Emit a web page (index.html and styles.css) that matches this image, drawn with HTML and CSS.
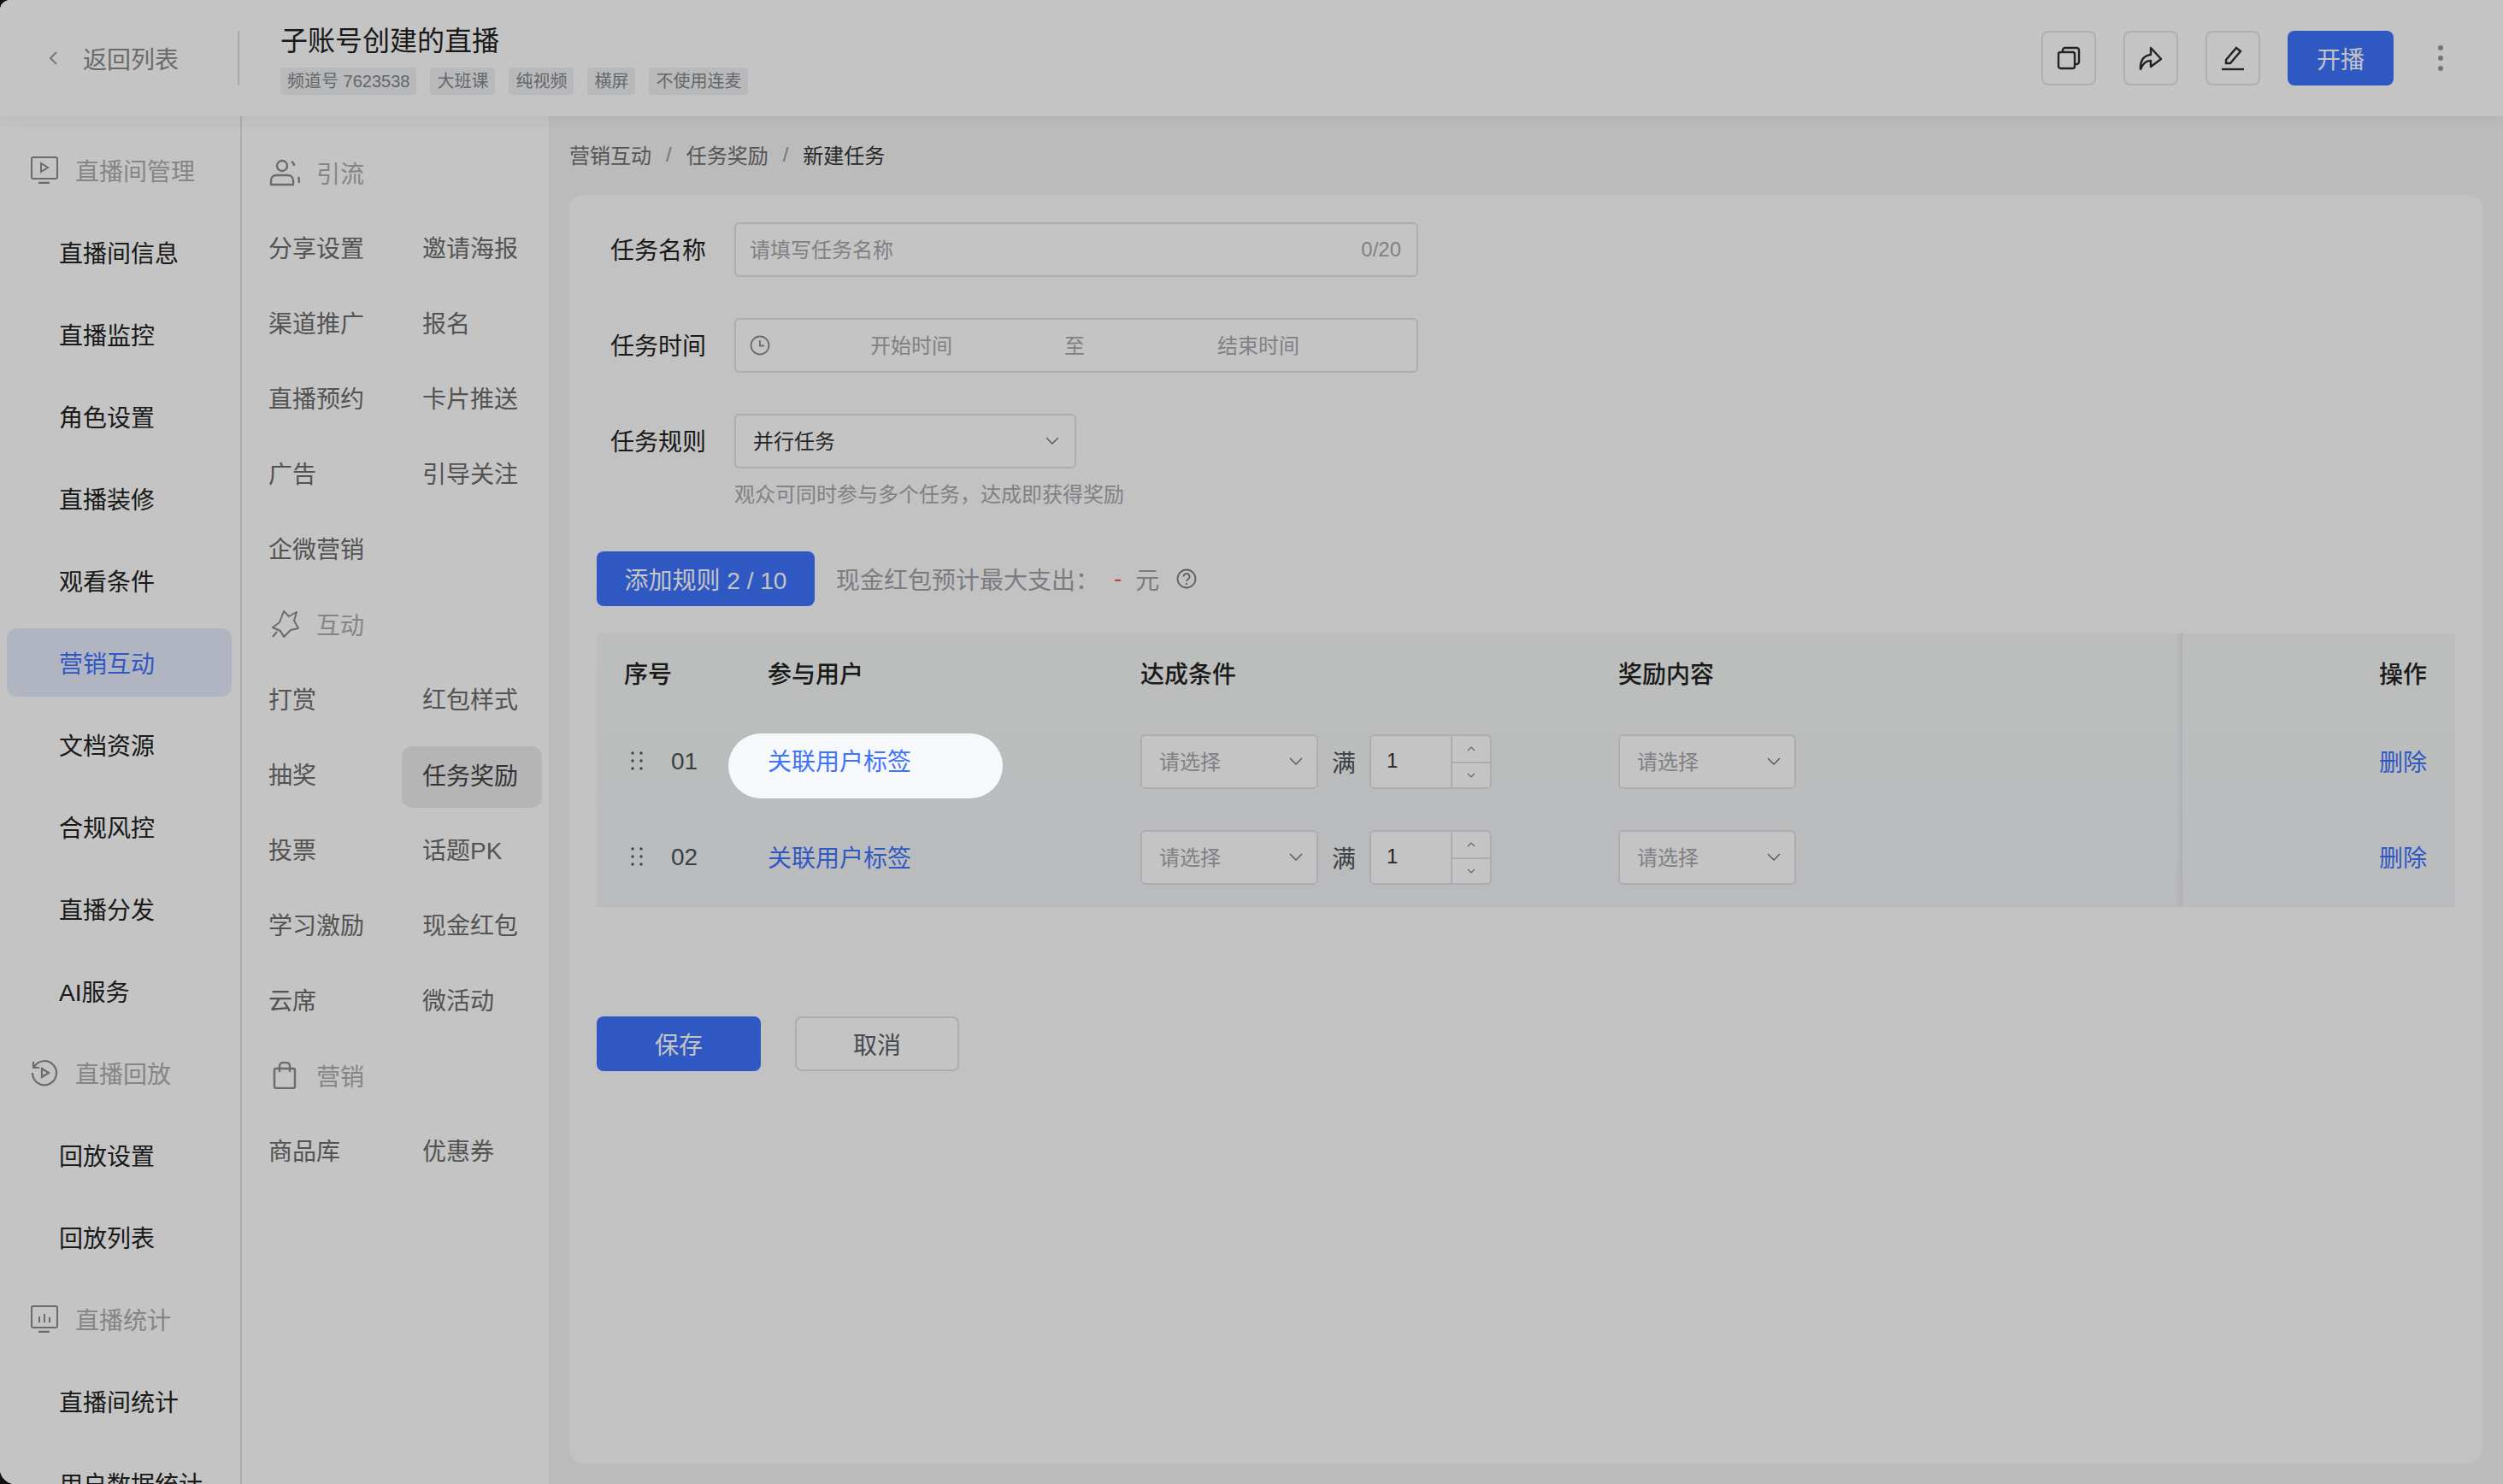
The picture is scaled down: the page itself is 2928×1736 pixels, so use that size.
FILE: index.html
```html
<!DOCTYPE html>
<html lang="zh-CN">
<head>
<meta charset="utf-8">
<title>新建任务</title>
<link rel="stylesheet" href="styles.css">
</head>
<body>
<div class="shell">

  <header class="topbar">
    <div class="back">
      <svg class="back-icon" width="12" height="20" viewBox="0 0 12 20"><path d="M10 3 3 10l7 7" fill="none" stroke="#9a9a9a" stroke-width="2"/></svg>
      <span>返回列表</span>
    </div>
    <div class="live-info">
      <div class="live-title">子账号创建的直播</div>
      <div class="tags">
        <span class="tag">频道号 7623538</span>
        <span class="tag">大班课</span>
        <span class="tag">纯视频</span>
        <span class="tag">横屏</span>
        <span class="tag">不使用连麦</span>
      </div>
    </div>
    <div class="actions">
      <button class="icon-btn">
        <svg width="28" height="28" viewBox="0 0 28 28" fill="none" stroke="#2e2e2e" stroke-width="2.4"><rect x="2" y="7" width="19" height="19" rx="2.5"/><path d="M7 7V4.500A2.500 2.500 0 0 1 9.500 2h14A2.500 2.500 0 0 1 26 4.500v14a2.500 2.500 0 0 1-2.500 2.500H21"/></svg>
      </button>
      <button class="icon-btn">
        <svg width="28" height="30" viewBox="0 0 28 30" fill="none" stroke="#2e2e2e" stroke-width="2.4" stroke-linejoin="round"><path d="M2 28c-1-9 3-16 12-17V3l12 13-12 9v-7c-6 0-9 3-12 10z"/></svg>
      </button>
      <button class="icon-btn">
        <svg width="28" height="30" viewBox="0 0 28 30" fill="none" stroke="#2e2e2e" stroke-width="2.400"><path d="M6 17 18 3l5 4-12 14H6z"/><path d="M1 28h26"/></svg>
      </button>
      <button class="primary-btn start-btn">开播</button>
      <div class="more"><i></i><i></i><i></i></div>
    </div>
  </header>

  <div class="body-row">

    <nav class="side-main">
      <div class="side-group">
        <svg width="32" height="32" viewBox="0 0 32 32" fill="none" stroke="#8c8c8c" stroke-width="2"><rect x="1" y="1" width="30" height="25" rx="2"/><path d="M12 8v10l8-5z"/><path d="M9 31h13" stroke-width="2.500"/></svg>
        <span>直播间管理</span>
      </div>
      <a class="side-item">直播间信息</a>
      <a class="side-item">直播监控</a>
      <a class="side-item">角色设置</a>
      <a class="side-item">直播装修</a>
      <a class="side-item">观看条件</a>
      <a class="side-item active">营销互动</a>
      <a class="side-item">文档资源</a>
      <a class="side-item">合规风控</a>
      <a class="side-item">直播分发</a>
      <a class="side-item">AI服务</a>
      <div class="side-group">
        <svg width="32" height="32" viewBox="0 0 32 32" fill="none" stroke="#8c8c8c" stroke-width="2.200"><path d="M4 9a14 14 0 1 1-2 7"/><path d="M3 3v7h7"/><path d="M13 11v10l8-5z"/></svg>
        <span>直播回放</span>
      </div>
      <a class="side-item">回放设置</a>
      <a class="side-item">回放列表</a>
      <div class="side-group">
        <svg width="32" height="32" viewBox="0 0 32 32" fill="none" stroke="#8c8c8c" stroke-width="2"><rect x="1" y="1" width="30" height="25" rx="2"/><path d="M10 13v7M16 10v10M22 14v6"/><path d="M9 31h13" stroke-width="2.500"/></svg>
        <span>直播统计</span>
      </div>
      <a class="side-item">直播间统计</a>
      <a class="side-item">用户数据统计</a>
    </nav>

    <nav class="side-sub">
      <div class="sub-head">
        <svg width="36" height="32" viewBox="0 0 36 32" fill="none" stroke="#8c8c8c" stroke-width="2.400"><circle cx="15" cy="8" r="6"/><path d="M2 30v-5a6 6 0 0 1 6-6h14a6 6 0 0 1 6 6v5z"/><path d="M26 3c2 1 3 3 3 5M34 21c1 2 1 5 1 7"/></svg>
        <span>引流</span>
      </div>
      <div class="sub-grid">
        <a>分享设置</a><a>邀请海报</a>
        <a>渠道推广</a><a>报名</a>
        <a>直播预约</a><a>卡片推送</a>
        <a>广告</a><a>引导关注</a>
        <a>企微营销</a>
      </div>
      <div class="sub-head">
        <svg width="36" height="32" viewBox="0 0 36 32" fill="none" stroke="#8c8c8c" stroke-width="2" stroke-linejoin="round"><path d="M17 1l6 6 9-5-3 10 5 9-9 2-8 8-4-7-9-4 8-6z"/><path d="M4 31l5-6"/></svg>
        <span>互动</span>
      </div>
      <div class="sub-grid">
        <a>打赏</a><a>红包样式</a>
        <a>抽奖</a><a class="current">任务奖励</a>
        <a>投票</a><a>话题PK</a>
        <a>学习激励</a><a>现金红包</a>
        <a>云席</a><a>微活动</a>
      </div>
      <div class="sub-head">
        <svg width="36" height="32" viewBox="0 0 36 32" fill="none" stroke="#8c8c8c" stroke-width="2.400"><rect x="6" y="8" width="24" height="23" rx="2"/><path d="M12 12V5a4 4 0 0 1 4-4h4a4 4 0 0 1 4 4v7"/></svg>
        <span>营销</span>
      </div>
      <div class="sub-grid">
        <a>商品库</a><a>优惠券</a>
      </div>
    </nav>

    <main class="content">
      <div class="crumbs">
        <span>营销互动</span><em>/</em><span>任务奖励</span><em>/</em><span class="crumb-now">新建任务</span>
      </div>

      <section class="card">
        <div class="form-row">
          <label class="form-label">任务名称</label>
          <div class="field wide">
            <span class="placeholder">请填写任务名称</span>
            <span class="counter">0/20</span>
          </div>
        </div>
        <div class="form-row">
          <label class="form-label">任务时间</label>
          <div class="field wide time-field">
            <svg width="24" height="24" viewBox="0 0 24 24" fill="none" stroke="#8a8c90" stroke-width="1.800"><circle cx="12" cy="12" r="10.500"/><path d="M12 6v6.500h5"/></svg>
            <span class="placeholder time-a">开始时间</span>
            <span class="placeholder time-to">至</span>
            <span class="placeholder time-b">结束时间</span>
          </div>
        </div>
        <div class="form-row rule-row">
          <label class="form-label">任务规则</label>
          <div class="field rule-select">
            <span class="value">并行任务</span>
            <svg width="16" height="10" viewBox="0 0 16 10"><path d="M1 1l7 7 7-7" fill="none" stroke="#6c6f74" stroke-width="1.400"/></svg>
          </div>
        </div>
        <div class="hint">观众可同时参与多个任务，达成即获得奖励</div>

        <div class="rule-bar">
          <button class="primary-btn add-btn">添加规则 2 / 10</button>
          <span class="budget">现金红包预计最大支出：</span>
          <span class="budget-val">-</span>
          <span class="budget">元</span>
          <svg width="24" height="24" viewBox="0 0 24 24" fill="none" stroke="#7c7e82" stroke-width="1.800"><circle cx="12" cy="12" r="10.500"/><path d="M8.500 9.500a3.500 3.500 0 1 1 5 3.200c-1 .5-1.500 1.100-1.500 2.300"/><path d="M12 17v2"/></svg>
        </div>

        <div class="rule-table">
          <div class="table-main">
            <div class="t-row t-head">
              <div class="c-no">序号</div>
              <div class="c-user">参与用户</div>
              <div class="c-cond">达成条件</div>
              <div class="c-prize">奖励内容</div>
            </div>
            <div class="t-row t-body">
              <div class="c-no">
                <svg class="drag" width="16" height="24" viewBox="0 0 16 24" fill="#55585c"><circle cx="3" cy="3" r="1.700"/><circle cx="13" cy="3" r="1.700"/><circle cx="3" cy="12" r="1.700"/><circle cx="13" cy="12" r="1.700"/><circle cx="3" cy="21" r="1.700"/><circle cx="13" cy="21" r="1.700"/></svg>
                <span class="num">01</span>
              </div>
              <div class="c-user"><a class="tag-link spotlight">关联用户标签</a></div>
              <div class="c-cond">
                <div class="field mini-select">
                  <span class="placeholder">请选择</span>
                  <svg width="16" height="10" viewBox="0 0 16 10"><path d="M1 1l7 7 7-7" fill="none" stroke="#6c6f74" stroke-width="1.400"/></svg>
                </div>
                <span class="full">满</span>
                <div class="field stepper">
                  <span class="value">1</span>
                  <div class="spin">
                    <div><svg width="10" height="6" viewBox="0 0 10 6"><path d="M1 5l4-4 4 4" fill="none" stroke="#85878b" stroke-width="1.200"/></svg></div>
                    <div><svg width="10" height="6" viewBox="0 0 10 6"><path d="M1 1l4 4 4-4" fill="none" stroke="#85878b" stroke-width="1.200"/></svg></div>
                  </div>
                </div>
              </div>
              <div class="c-prize">
                <div class="field mini-select">
                  <span class="placeholder">请选择</span>
                  <svg width="16" height="10" viewBox="0 0 16 10"><path d="M1 1l7 7 7-7" fill="none" stroke="#6c6f74" stroke-width="1.400"/></svg>
                </div>
              </div>
            </div>
            <div class="t-row t-body">
              <div class="c-no">
                <svg class="drag" width="16" height="24" viewBox="0 0 16 24" fill="#55585c"><circle cx="3" cy="3" r="1.700"/><circle cx="13" cy="3" r="1.700"/><circle cx="3" cy="12" r="1.700"/><circle cx="13" cy="12" r="1.700"/><circle cx="3" cy="21" r="1.700"/><circle cx="13" cy="21" r="1.700"/></svg>
                <span class="num">02</span>
              </div>
              <div class="c-user"><a class="tag-link">关联用户标签</a></div>
              <div class="c-cond">
                <div class="field mini-select">
                  <span class="placeholder">请选择</span>
                  <svg width="16" height="10" viewBox="0 0 16 10"><path d="M1 1l7 7 7-7" fill="none" stroke="#6c6f74" stroke-width="1.400"/></svg>
                </div>
                <span class="full">满</span>
                <div class="field stepper">
                  <span class="value">1</span>
                  <div class="spin">
                    <div><svg width="10" height="6" viewBox="0 0 10 6"><path d="M1 5l4-4 4 4" fill="none" stroke="#85878b" stroke-width="1.200"/></svg></div>
                    <div><svg width="10" height="6" viewBox="0 0 10 6"><path d="M1 1l4 4 4-4" fill="none" stroke="#85878b" stroke-width="1.200"/></svg></div>
                  </div>
                </div>
              </div>
              <div class="c-prize">
                <div class="field mini-select">
                  <span class="placeholder">请选择</span>
                  <svg width="16" height="10" viewBox="0 0 16 10"><path d="M1 1l7 7 7-7" fill="none" stroke="#6c6f74" stroke-width="1.400"/></svg>
                </div>
              </div>
            </div>
          </div>
          <div class="table-fixed">
            <div class="t-row t-head">操作</div>
            <div class="t-row t-body"><a class="del-link">删除</a></div>
            <div class="t-row t-body"><a class="del-link">删除</a></div>
          </div>
        </div>

        <div class="form-foot">
          <button class="primary-btn foot-btn">保存</button>
          <button class="ghost-btn foot-btn">取消</button>
        </div>
      </section>
    </main>
  </div>
</div>
</body>
</html>
```

FILE: styles.css
```css
* {
  box-sizing: border-box;
}
html, body {
  margin: 0;
  height: 100%;
}
body {
  background: #111;
  overflow: hidden;
  font-family: "Liberation Sans", "Noto Sans CJK SC", sans-serif;
  color: #222;
}
a {
  display: block;
}
button {
  font-family: inherit;
  border: none;
  padding: 0;
}

.shell {
  width: 2928px;
  height: 1736px;
  background: #fff;
  border-radius: 12px 0 0 18px;
  overflow: hidden;
}

/* top bar */
.topbar {
  height: 136px;
  display: flex;
  align-items: center;
  background: #fff;
  position: relative;
  box-shadow: 0 6px 16px rgba(0,0,0,.05);
}
.back {
  width: 280px;
  height: 64px;
  flex: none;
  display: flex;
  align-items: center;
  padding-left: 56px;
  font-size: 28px;
  color: #8b8b8b;
  border-right: 2px solid #dcdcdc;
}
.back-icon {
  margin-right: 29px;
}
.live-info {
  margin-left: 48px;
}
.live-title {
  font-size: 32px;
  line-height: 44px;
  color: #222;
}
.tags {
  display: flex;
  gap: 16px;
  margin-top: 9px;
}
.tag {
  height: 32px;
  line-height: 32px;
  padding: 0 8px;
  font-size: 20px;
  color: #85878b;
  background: #f0f1f3;
  border-radius: 4px;
}
.actions {
  margin-left: auto;
  display: flex;
  align-items: center;
  gap: 32px;
  padding-right: 68px;
}
.icon-btn {
  width: 64px;
  height: 64px;
  background: #fff;
  border: 2px solid #e3e3e3;
  border-radius: 8px;
  display: flex;
  align-items: center;
  justify-content: center;
}
.primary-btn {
  background: #3e73fe;
  color: #fff;
  font-size: 28px;
  border-radius: 8px;
}
.start-btn {
  width: 124px;
  height: 64px;
}
.more {
  width: 8px;
  margin-left: 20px;
  display: flex;
  flex-direction: column;
  gap: 6px;
}
.more i {
  width: 6px;
  height: 6px;
  border-radius: 50%;
  background: #999;
}

.body-row {
  display: flex;
  height: 1600px;
}

/* first menu */
.side-main {
  width: 283px;
  flex: none;
  padding: 15px 10px 0 8px;
  background: #fff;
  border-right: 2px solid #e2e2e2;
}
.side-group,
.side-item {
  height: 96px;
  display: flex;
  align-items: center;
  font-size: 28px;
}
.side-group {
  padding-left: 28px;
  color: #aeaeae;
}
.side-group svg {
  margin-right: 20px;
}
.side-item {
  padding-left: 61px;
  color: #222;
}
.side-item.active {
  height: 80px;
  margin: 8px 0;
  border-radius: 12px;
  color: #3e73fe;
  background: #e6ecfb;
}

/* second menu */
.side-sub {
  width: 359px;
  flex: none;
  padding-top: 22px;
  background: #fff;
}
.sub-head {
  height: 88px;
  display: flex;
  align-items: center;
  padding-left: 32px;
  font-size: 28px;
  color: #aeaeae;
}
.sub-head svg {
  margin-right: 19px;
}
.sub-grid {
  display: grid;
  grid-template-columns: 180px 164px;
  padding-left: 31px;
  font-size: 28px;
  color: #6d6d6d;
}
.sub-grid a {
  height: 88px;
  line-height: 92px;
}
.sub-grid .current {
  width: 164px;
  height: 72px;
  line-height: 72px;
  margin: 11px 0 5px -24px;
  padding-left: 24px;
  border-radius: 12px;
  background: #ececec;
  color: #444;
}

/* content */
.content {
  flex: 1;
  padding: 0 24px 24px;
  background: #f4f4f4;
}
.crumbs {
  height: 92px;
  padding-bottom: 3px;
  display: flex;
  align-items: center;
  font-size: 24px;
  color: #6f6f6f;
}
.crumbs em {
  font-style: normal;
  margin: 0 17px;
  color: #9a9a9a;
}
.crumb-now {
  color: #333;
}
.card {
  height: 1484px;
  padding: 32px 32px 0;
  background: #fdfdfd;
  border-radius: 16px;
}
.form-row {
  display: flex;
  align-items: center;
  height: 64px;
  margin-bottom: 48px;
}
.form-row.rule-row {
  margin-bottom: 0;
}
.form-label {
  width: 161px;
  padding-left: 16px;
  margin-bottom: 3px;
  flex: none;
  font-size: 28px;
  color: #222;
}
.field {
  height: 64px;
  display: flex;
  align-items: center;
  background: #fff;
  border: 2px solid #dfe1e5;
  border-radius: 6px;
  font-size: 24px;
}
.placeholder {
  margin-bottom: 3px;
  color: #a6a8ac;
}
.value {
  margin-bottom: 3px;
  color: #333;
}
.wide {
  width: 800px;
  padding: 0 18px 0 16px;
}
.counter {
  margin-left: auto;
  color: #a6a8ac;
}
.time-field svg {
  flex: none;
}
.time-a {
  margin-left: 117px;
}
.time-to {
  margin-left: 131px;
}
.time-b {
  margin-left: 155px;
}
.rule-select {
  width: 400px;
  padding: 0 18px 0 20px;
  justify-content: space-between;
}
.hint {
  margin: 13px 0 0 161px;
  height: 35px;
  line-height: 35px;
  font-size: 24px;
  color: #a6a8ac;
}
.rule-bar {
  display: flex;
  align-items: center;
  margin-top: 49px;
  height: 64px;
  font-size: 28px;
  color: #a0a2a6;
}
.add-btn {
  width: 255px;
  height: 64px;
  margin-right: 25px;
}
.budget-val {
  margin: 0 16px 0 17px;
  color: #ee5a5a;
}
.rule-bar svg {
  margin-left: 20px;
}

/* rule table */
.rule-table {
  display: flex;
  margin-top: 32px;
  height: 320px;
  background: linear-gradient(#f5f7f5, #f3f4f7);
  border-bottom: 2px solid #eef0f2;
}
.table-main {
  width: 1854px;
  flex: none;
  box-shadow: inset -6px 0 5px -3px #e3e5ec;
}
.table-fixed {
  flex: 1;
  padding-right: 33px;
  border-left: 1px solid #e3e5ec;
  font-size: 28px;
  text-align: right;
}
.t-row {
  display: flex;
  align-items: center;
}
.t-head {
  height: 94px;
  padding-bottom: 2px;
  font-size: 28px;
  font-weight: 500;
  color: #222;
}
.t-body {
  height: 112px;
  font-size: 28px;
}
.table-fixed .t-row {
  justify-content: flex-end;
}
.c-no {
  width: 200px;
  padding-left: 32px;
  display: flex;
  align-items: center;
  flex: none;
}
.c-no .drag {
  margin-left: 7px;
}
.c-user {
  width: 436px;
  flex: none;
}
.c-cond {
  width: 559px;
  flex: none;
  display: flex;
  align-items: center;
}
.c-prize {
  flex: 1;
}
.drag {
  margin-right: 32px;
  margin-top: -2px;
}
.num {
  color: #4f5257;
}
.tag-link,
.del-link {
  margin-bottom: 2px;
  color: #3e73fe;
}
.spotlight {
  position: relative;
  z-index: 10;
  width: 321px;
  height: 76px;
  line-height: 67px;
  margin: 10px 0 0 -46px;
  padding-left: 46px;
  border-radius: 38px;
  background: #f6f8fb;
  box-shadow: 0 0 0 4000px rgba(0,0,0,.23);
}
.mini-select {
  width: 208px;
  padding: 0 16px 0 20px;
  justify-content: space-between;
}
.full {
  margin: 0 16px;
  color: #4f5257;
}
.stepper {
  width: 143px;
  padding-left: 18px;
  justify-content: space-between;
}
.spin {
  width: 46px;
  height: 60px;
  border-left: 2px solid #dfe1e5;
}
.spin div {
  height: 30px;
  display: flex;
  align-items: center;
  justify-content: center;
}
.spin div + div {
  border-top: 2px solid #dfe1e5;
}

.form-foot {
  display: flex;
  gap: 40px;
  margin-top: 128px;
}
.foot-btn {
  width: 192px;
  height: 64px;
}
.ghost-btn {
  background: #fff;
  border: 2px solid #dfe1e5;
  border-radius: 8px;
  font-size: 28px;
  color: #5a6068;
}
```
